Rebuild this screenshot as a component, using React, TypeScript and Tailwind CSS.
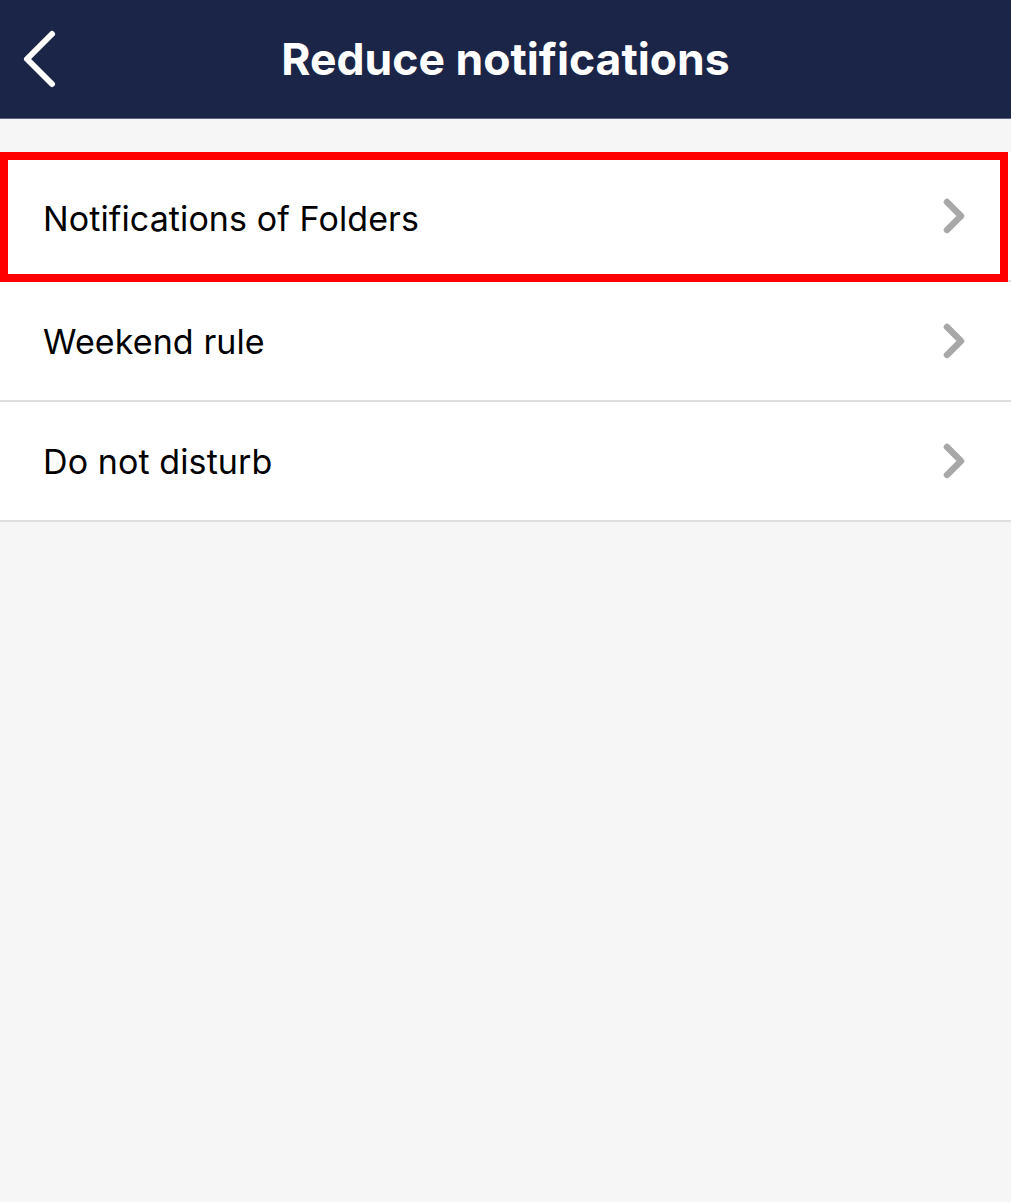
import React from "react";

function Chevron() {
  return (
    <svg width="24" height="40" viewBox="0 0 24 40" className="shrink-0">
      <polyline points="5,6 19,20 5,34" fill="none" stroke="#a8a8a8" strokeWidth="6.5" strokeLinecap="round" strokeLinejoin="round" />
    </svg>
  );
}

function Row({ label, tall, highlight }: { label: string; tall?: boolean; highlight?: boolean }) {
  return (
    <div className={`relative flex items-center justify-between bg-white border-b-2 border-[#dedede] pl-[43px] pr-[45px] ${tall ? "h-[130px]" : "h-[120px]"}`}>
      <span className={`text-[34px] text-black tracking-[0.1px] ${tall ? "mt-[4px]" : ""}`}>{label}</span>
      <Chevron />
      {highlight && (
        <div className="absolute left-0 top-0 w-[1008px] h-[130px] border-[8px] border-[#ff0000] pointer-events-none" />
      )}
    </div>
  );
}

export default function App() {
  return (
    <div className="w-[1011px] h-[1202px] bg-[#f6f6f6] flex flex-col" style={{ fontFamily: '"Inter", "Liberation Sans", sans-serif' }}>
      <header className="relative h-[119px] bg-[#1b2547] border-b border-[#5a6280] flex items-center justify-center shrink-0">
        <svg width="50" height="70" viewBox="0 0 50 70" className="absolute left-[14px] top-[25px]">
          <polyline points="38,9 13,34 38,59" fill="none" stroke="white" strokeWidth="6" strokeLinecap="round" strokeLinejoin="round" />
        </svg>
        <h1 className="text-white font-bold text-[44.5px] tracking-[0px] leading-none">Reduce notifications</h1>
      </header>
      <div className="h-[33px] shrink-0" />
      <Row label="Notifications of Folders" tall highlight />
      <Row label="Weekend rule" />
      <Row label="Do not disturb" />
    </div>
  );
}
